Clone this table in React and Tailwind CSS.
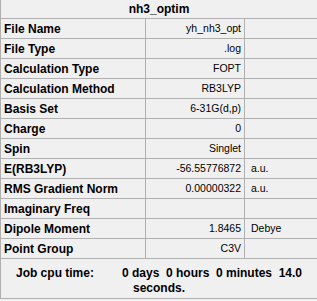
export default function App() {
  const rows = [
    ["File Name", "yh_nh3_opt", ""],
    ["File Type", ".log", ""],
    ["Calculation Type", "FOPT", ""],
    ["Calculation Method", "RB3LYP", ""],
    ["Basis Set", "6-31G(d,p)", ""],
    ["Charge", "0", ""],
    ["Spin", "Singlet", ""],
    ["E(RB3LYP)", "-56.55776872", "a.u."],
    ["RMS Gradient Norm", "0.00000322", "a.u."],
    ["Imaginary Freq", "", ""],
    ["Dipole Moment", "1.8465", "Debye"],
    ["Point Group", "C3V", ""],
  ];

  return (
    <div className="w-[317px] h-[301px] bg-[#f0f0f0] text-black font-['Liberation_Sans',Arial,sans-serif] overflow-hidden">
      <div className="border-l border-b border-[#b0b0b0]">
        <div className="h-[19px] border-b border-[#b0b0b0] flex items-center justify-center font-bold text-[12px] leading-none">
          nh3_optim
        </div>
        {rows.map(([label, value, unit]) => (
          <div
            key={label}
            className="h-[20px] border-b border-[#b0b0b0] grid grid-cols-[145px_99px_1fr]"
          >
            <div className="border-r border-[#b0b0b0] flex items-center pl-[3px] font-bold text-[12px] leading-none">
              {label}
            </div>
            <div className="border-r border-[#b0b0b0] flex items-center justify-end pr-[3px] text-[10.5px] leading-none">
              {value}
            </div>
            <div className="flex items-center pl-[6px] text-[10.5px] leading-none">
              {unit}
            </div>
          </div>
        ))}
        <div className="h-[39px] pt-[7px] text-center font-bold text-[12px] leading-[15px]">
          <div className="whitespace-pre">
            Job cpu time:<span className="ml-[28px]">0 days  0 hours  0 minutes  14.0</span>
          </div>
          <div>seconds.</div>
        </div>
      </div>
    </div>
  );
}
